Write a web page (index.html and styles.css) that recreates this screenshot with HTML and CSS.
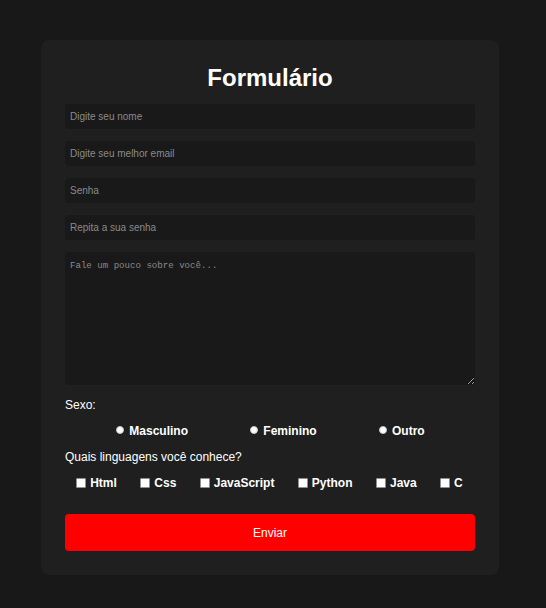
FILE: index.html
```html
<!DOCTYPE html>
<html lang="pt-BR">
<head>
<meta charset="utf-8">
<title>Formulário</title>
<link rel="stylesheet" href="styles.css">
</head>
<body>
<form class="card">
  <h1 class="title">Formulário</h1>
  <input class="field" type="text" placeholder="Digite seu nome">
  <input class="field" type="email" placeholder="Digite seu melhor email">
  <input class="field" type="password" placeholder="Senha">
  <input class="field" type="password" placeholder="Repita a sua senha">
  <textarea class="area" placeholder="Fale um pouco sobre você..."></textarea>
  <p class="label">Sexo:</p>
  <div class="radios">
    <label class="opt opt-radio"><input type="radio" name="sexo" class="radio">Masculino</label>
    <label class="opt opt-radio"><input type="radio" name="sexo" class="radio">Feminino</label>
    <label class="opt opt-radio"><input type="radio" name="sexo" class="radio">Outro</label>
  </div>
  <p class="label label-tight">Quais linguagens você conhece?</p>
  <div class="checks">
    <label class="opt opt-check"><input type="checkbox" class="check">Html</label>
    <label class="opt opt-check"><input type="checkbox" class="check">Css</label>
    <label class="opt opt-check"><input type="checkbox" class="check">JavaScript</label>
    <label class="opt opt-check"><input type="checkbox" class="check">Python</label>
    <label class="opt opt-check"><input type="checkbox" class="check">Java</label>
    <label class="opt opt-check"><input type="checkbox" class="check">C</label>
  </div>
  <button class="btn" type="button">Enviar</button>
</form>
</body>
</html>
```
FILE: styles.css
```css
html, body {
  margin: 0;
  padding: 0;
  background: #181818;
  font-family: "Liberation Sans", Arial, sans-serif;
  color: #fff;
}
body {
  padding: 40px 0 0 41px;
  height: 608px;
  box-sizing: border-box;
}
.card {
  width: 458px;
  box-sizing: border-box;
  background: #1f1f1f;
  border-radius: 8px;
  padding: 24px 24px 24px 24px;
  display: flex;
  flex-direction: column;
}
.title {
  margin: 0 0 12px 0;
  font-size: 24px;
  line-height: 28px;
  font-weight: bold;
  text-align: center;
}
.field {
  height: 25px;
  box-sizing: border-box;
  margin: 0 0 12px 0;
  padding: 0 5px;
  border: none;
  border-radius: 4px;
  background: #191919;
  color: #ddd;
  font-family: "Liberation Sans", Arial, sans-serif;
  font-size: 10px;
  outline: none;
}
.field::placeholder { color: #8a8a8a; }
.area {
  height: 133px;
  box-sizing: border-box;
  margin: 0;
  padding: 8px 5px;
  border: none;
  border-radius: 4px;
  background: #191919;
  color: #ddd;
  font-family: "Liberation Mono", monospace;
  font-size: 9.1px;
  resize: vertical;
  outline: none;
}
.area::placeholder { color: #8a8a8a; }
.label {
  margin: 13px 0 0 0;
  font-size: 12px;
  line-height: 14px;
}
.label-tight {
  margin-top: 12px;
}
.radios {
  display: flex;
  justify-content: space-evenly;
  margin-top: 11px;
  height: 15px;
}
.checks {
  display: flex;
  justify-content: space-around;
  margin-top: 11px;
  height: 15px;
}
.opt {
  display: flex;
  align-items: center;
  font-size: 12px;
  font-weight: bold;
}
.opt-radio {
  padding: 0 11px 0 12px;
}
.opt-check {
  padding: 0 4px 0 0;
}
.radio {
  appearance: none;
  -webkit-appearance: none;
  width: 8px;
  height: 8px;
  margin: 0 5px 1px 0;
  border-radius: 50%;
  background: #fff;
  border: 1px solid #c4c4c4;
  box-sizing: border-box;
}
.check {
  appearance: none;
  -webkit-appearance: none;
  width: 10px;
  height: 10px;
  margin: 0 4px 0 3px;
  background: #fff;
  border: 1px solid #8f8f8f;
  border-radius: 1px;
  box-sizing: border-box;
}
.btn {
  margin-top: 24px;
  height: 37px;
  border: none;
  border-radius: 4px;
  background: #ff0000;
  color: #fff;
  font-family: "Liberation Sans", Arial, sans-serif;
  font-size: 12px;
}
```
